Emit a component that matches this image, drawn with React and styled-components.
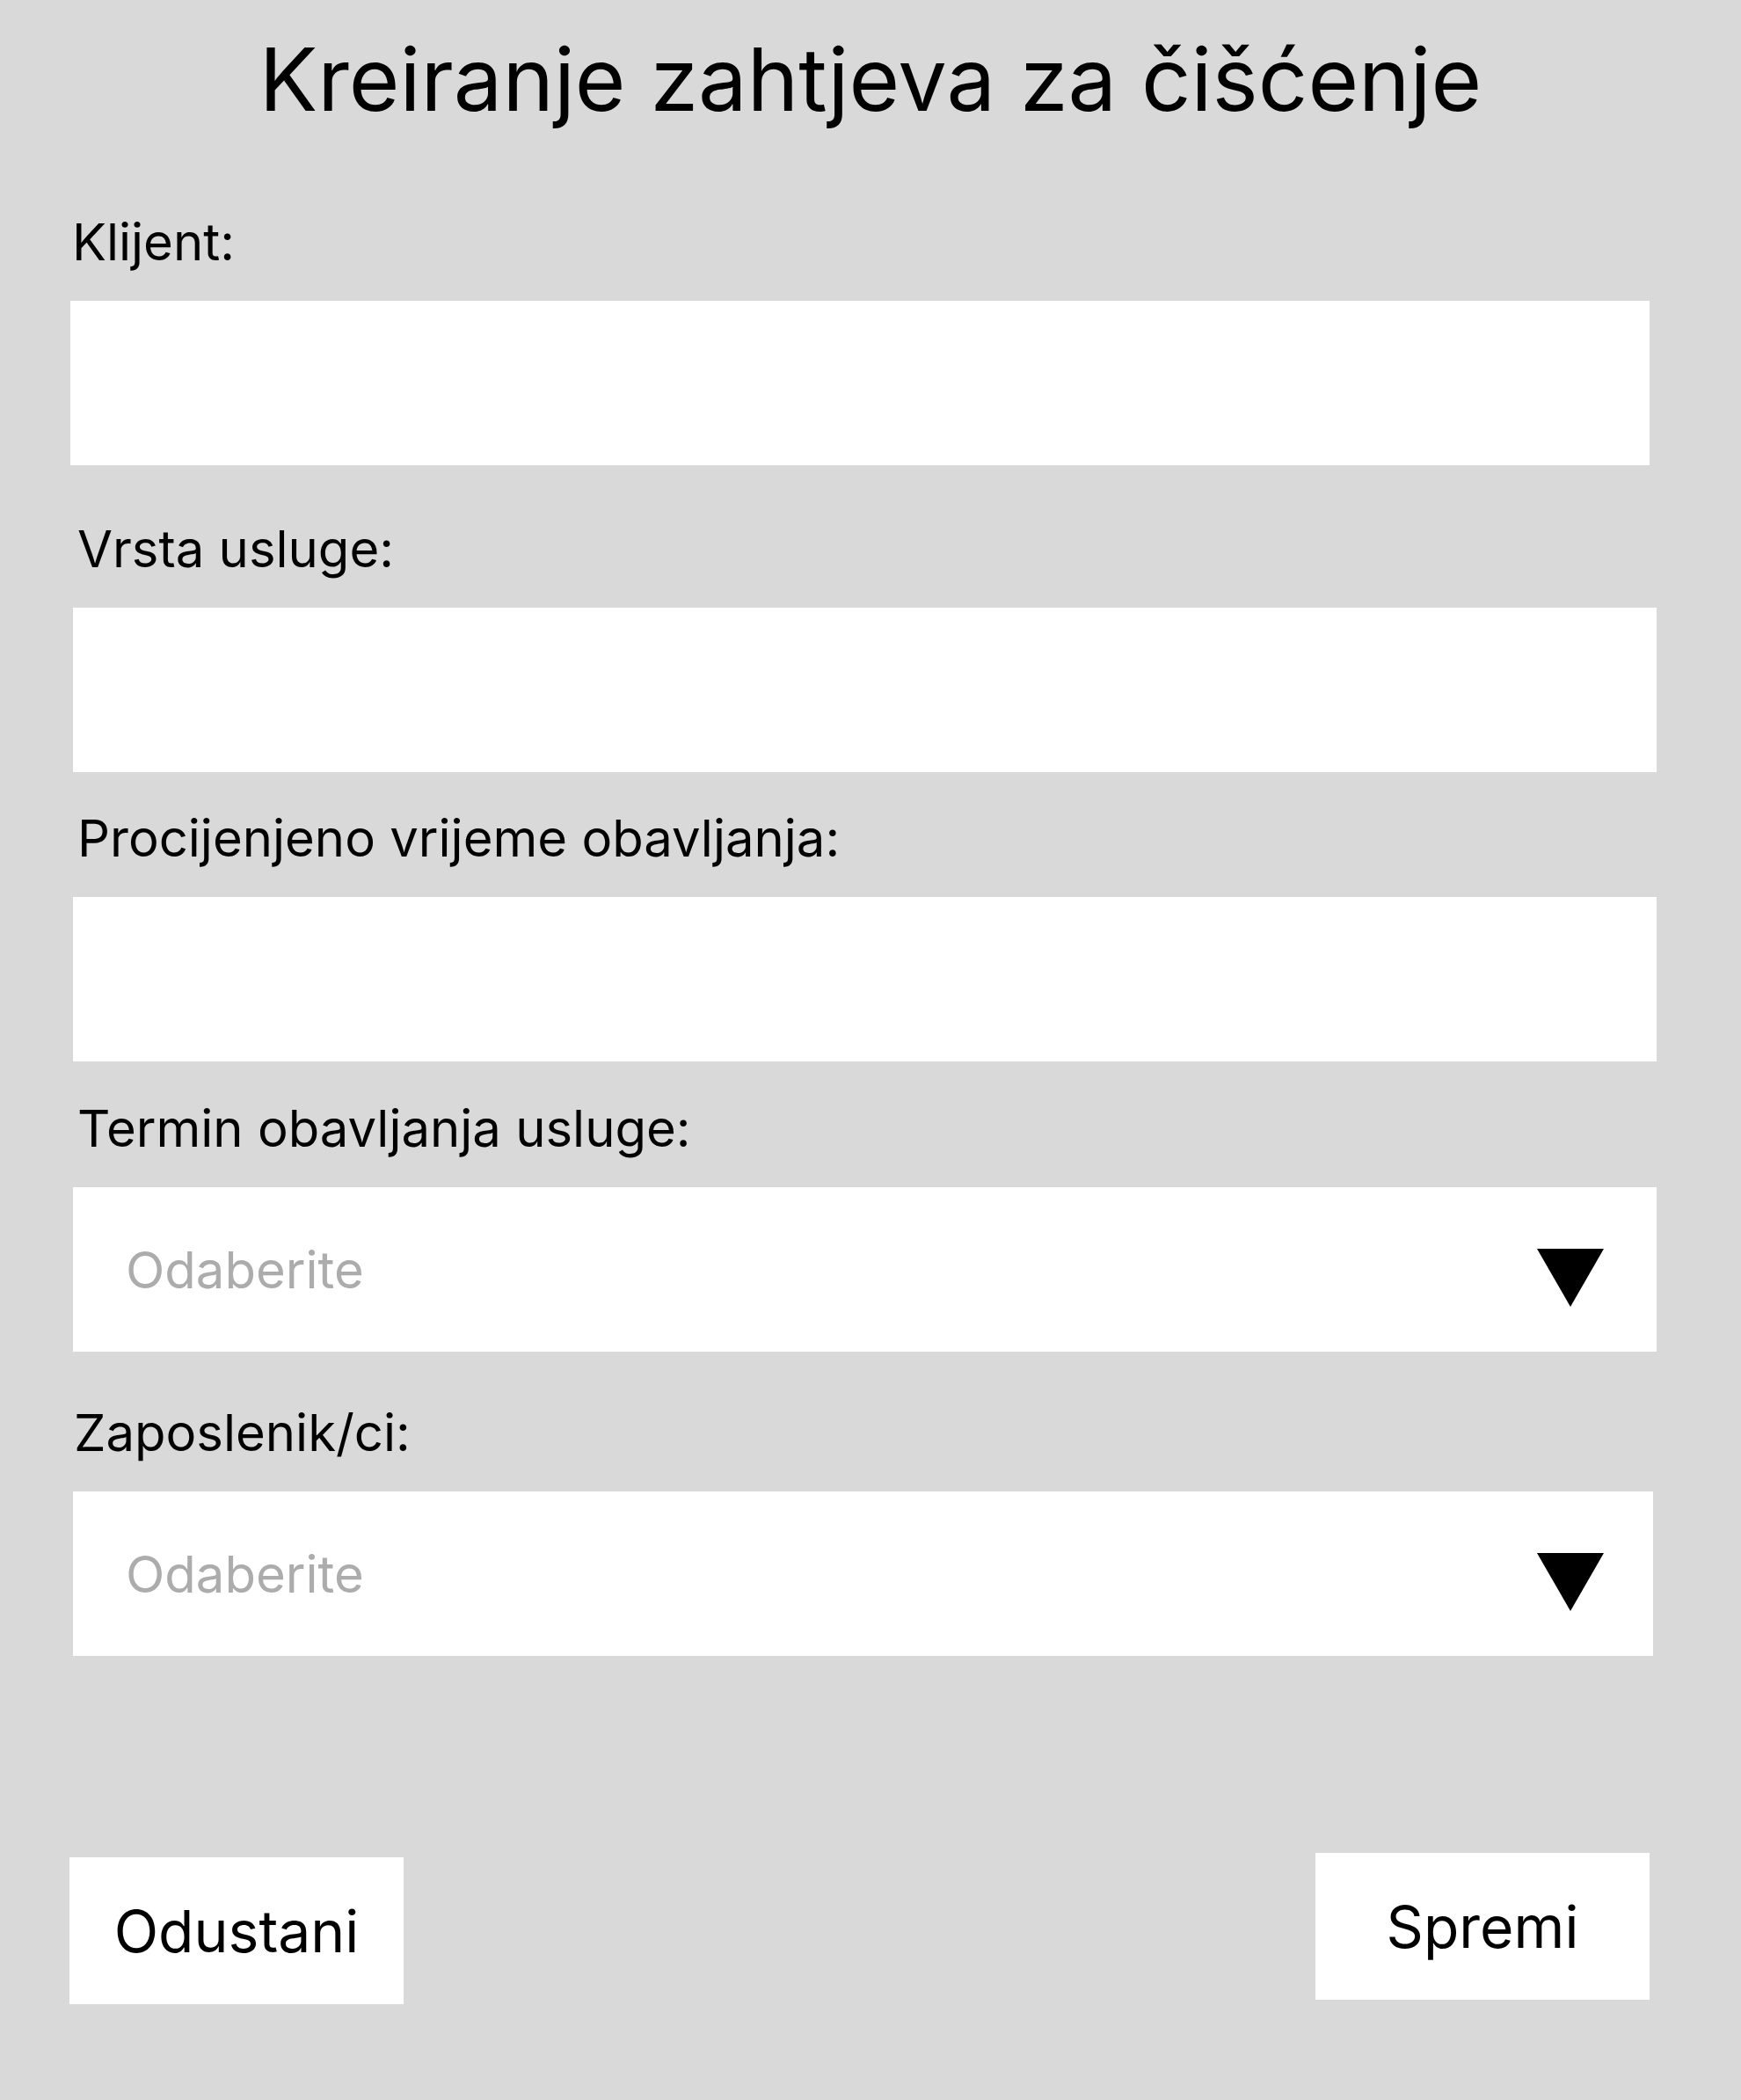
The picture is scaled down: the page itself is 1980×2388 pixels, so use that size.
import React from 'react';
import styled, { createGlobalStyle } from 'styled-components';

const GlobalStyle = createGlobalStyle`
  html, body {
    margin: 0;
    padding: 0;
    background: #d9d9d9;
  }
  body {
    font-family: Inter, "Noto Sans", "Liberation Sans", sans-serif;
    color: #000;
  }
`;

const Page = styled.div`
  width: 1980px;
  min-height: 2388px;
  box-sizing: border-box;
  padding: 30px 96px 0 80px;
  background: #d9d9d9;
`;

const Title = styled.h1`
  margin: 0 0 90px -80px;
  width: 1980px;
  font-size: 99px;
  line-height: 120px;
  font-weight: 400;
  text-align: center;
`;

// small per-field offsets: the wireframe boxes don't line up exactly
const Field = styled.div`
  display: flex;
  flex-direction: column;
  margin: ${(p) => p.$gap || 0}px ${(p) => p.$right || 0}px 0 ${(p) => p.$left || 0}px;
`;

const Label = styled.label`
  font-size: 58px;
  line-height: 70px;
  margin: 0 0 32px ${(p) => p.$indent || 0}px;
`;

const TextInput = styled.input`
  display: block;
  box-sizing: border-box;
  width: 100%;
  height: 187px;
  border: 0;
  outline: none;
  background: #fff;
  padding: 0 60px;
  font-family: inherit;
  font-size: 58px;
`;

const Select = styled.div`
  display: flex;
  align-items: center;
  justify-content: space-between;
  box-sizing: border-box;
  width: 100%;
  height: 187px;
  background: #fff;
  padding: 0 ${(p) => p.$padRight || 60}px 0 60px;
  cursor: pointer;
`;

const Placeholder = styled.span`
  font-size: 58px;
  line-height: 70px;
  color: #acacac;
`;

const Arrow = styled.svg`
  width: 76px;
  height: 66px;
  margin-top: 18px;
  flex-shrink: 0;
`;

const Actions = styled.div`
  display: flex;
  justify-content: space-between;
  align-items: flex-start;
  margin: 224px 8px 0 -1px;
`;

const Button = styled.button`
  width: 380px;
  height: 167px;
  margin-top: ${(p) => p.$drop || 0}px;
  border: 0;
  background: #fff;
  font-family: inherit;
  font-size: 66px;
  font-weight: 400;
  color: #000;
  cursor: pointer;
`;

const Caret = () => (
  <Arrow viewBox="0 0 76 66">
    <polygon points="0,0 76,0 38,66" fill="#000" />
  </Arrow>
);

export default function App() {
  return (
    <Page>
      <GlobalStyle />
      <Title>Kreiranje zahtjeva za čišćenje</Title>

      <Field $right={8}>
        <Label $indent={2}>Klijent:</Label>
        <TextInput type="text" />
      </Field>

      <Field $gap={60} $left={3}>
        <Label $indent={5}>Vrsta usluge:</Label>
        <TextInput type="text" />
      </Field>

      <Field $gap={40} $left={3}>
        <Label $indent={5}>Procijenjeno vrijeme obavljanja:</Label>
        <TextInput type="text" />
      </Field>

      <Field $gap={41} $left={3}>
        <Label $indent={5}>Termin obavljanja usluge:</Label>
        <Select>
          <Placeholder>Odaberite</Placeholder>
          <Caret />
        </Select>
      </Field>

      <Field $gap={57} $left={3} $right={4}>
        <Label $indent={1}>Zaposlenik/ci:</Label>
        <Select $padRight={56}>
          <Placeholder>Odaberite</Placeholder>
          <Caret />
        </Select>
      </Field>

      <Actions>
        <Button $drop={5}>Odustani</Button>
        <Button>Spremi</Button>
      </Actions>
    </Page>
  );
}
